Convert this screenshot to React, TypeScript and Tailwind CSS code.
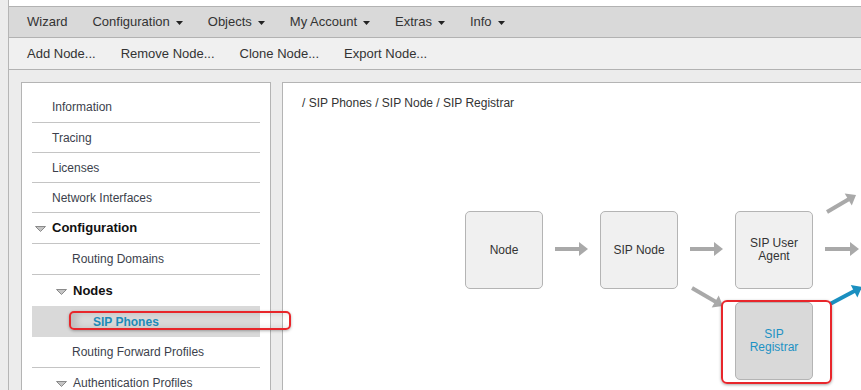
import React from "react";

const menu = [
  { label: "Wizard", caret: false },
  { label: "Configuration", caret: true },
  { label: "Objects", caret: true },
  { label: "My Account", caret: true },
  { label: "Extras", caret: true },
  { label: "Info", caret: true },
];

const actions = ["Add Node...", "Remove Node...", "Clone Node...", "Export Node..."];

// tree rows: h = row height incl. bottom border
const tree = [
  { label: "Information", level: 0, h: "h-[31px]", line: true },
  { label: "Tracing", level: 0, h: "h-[30px]", line: true },
  { label: "Licenses", level: 0, h: "h-[30px]", line: true },
  { label: "Network Interfaces", level: 0, h: "h-[30px]", line: true },
  { label: "Configuration", level: 0, h: "h-[31px]", line: true, folder: true, bold: true },
  { label: "Routing Domains", level: 1, h: "h-[31px]", line: true },
  { label: "Nodes", level: 1, h: "h-[31px]", line: false, folder: true, bold: true },
  { label: "SIP Phones", level: 2, h: "h-[31px]", line: false, active: true },
  { label: "Routing Forward Profiles", level: 1, h: "h-[31px]", line: true },
  { label: "Authentication Profiles", level: 1, h: "h-[31px]", line: true, folder: true },
];

function Caret() {
  return (
    <svg width="7" height="4" viewBox="0 0 7 4" className="ml-[6px] mt-[1px]">
      <polygon points="0,0 7,0 3.5,4" fill="#222" />
    </svg>
  );
}

function TreeToggle() {
  return (
    <svg width="11" height="6" viewBox="0 0 11 6" className="mr-[6px] mt-[2px]">
      <polygon points="0.5,0.5 10.5,0.5 5.5,5.5" fill="#c4c4c4" stroke="#8a8a8a" strokeWidth="1" />
    </svg>
  );
}

function Arrow({ x1, y1, x2, y2, color = "#a9a9a9" }: any) {
  const dx = x2 - x1;
  const dy = y2 - y1;
  const len = Math.sqrt(dx * dx + dy * dy);
  const ux = dx / len;
  const uy = dy / len;
  const hl = 9;
  const hw = 7;
  const bx = x2 - ux * hl;
  const by = y2 - uy * hl;
  const pts = `${x2},${y2} ${bx - uy * hw},${by + ux * hw} ${bx + uy * hw},${by - ux * hw}`;
  return (
    <g>
      <line x1={x1} y1={y1} x2={bx + ux} y2={by + uy} stroke={color} strokeWidth="4" />
      <polygon points={pts} fill={color} />
    </g>
  );
}

function Box({ left, top, active, children }: any) {
  return (
    <div
      className={
        "absolute w-[78px] h-[78px] rounded-[5px] border border-[#b4b4b4] flex items-center justify-center text-center text-[12px] leading-[13px] " +
        (active ? "bg-[#d9d9d9] text-[#1d92c4]" : "bg-[#f0f0f0] text-[#333]")
      }
      style={{ left, top }}
    >
      {children}
    </div>
  );
}

export default function App() {
  return (
    <div
      className="relative flex w-[861px] h-[390px] overflow-hidden bg-white text-[#333]"
      style={{ fontFamily: '"Liberation Sans", Arial, sans-serif' }}
    >
      {/* left frame gutter */}
      <div className="w-[9px] shrink-0 bg-[#ececec] border-r border-[#b5b5b5]" />

      <div className="flex-1 flex flex-col min-w-0">
        <div className="h-[6px] shrink-0 bg-white" />
        {/* menu bar */}
        <div className="h-[32px] shrink-0 flex items-center gap-[25px] pl-[18px] bg-[#d9d9d9] border-y border-[#b2b2b2] text-[13px]">
          {menu.map((m) => (
            <div key={m.label} className="flex items-center">
              <span>{m.label}</span>
              {m.caret ? <Caret /> : null}
            </div>
          ))}
        </div>
        {/* toolbar */}
        <div className="h-[32px] shrink-0 flex items-center gap-[25px] pl-[18px] bg-[#f0f0f0] border-b border-[#b2b2b2] text-[13px]">
          {actions.map((a) => (
            <span key={a}>{a}</span>
          ))}
        </div>

        {/* main */}
        <div className="flex-1 flex items-start gap-[11px] bg-[#ececec] pt-[12px] pl-[12px]">
          {/* tree panel */}
          <div className="w-[250px] h-[400px] shrink-0 bg-white border border-[#b4b4b4] px-[10px] pt-[9px]">
            {tree.map((r) => (
              <div
                key={r.label}
                className={
                  "flex items-center text-[12px] " +
                  r.h +
                  (r.line ? " border-b border-[#c4c4c4]" : "") +
                  (r.active ? " bg-[#d9d9d9]" : "")
                }
                style={{ paddingLeft: r.folder ? 3 + r.level * 21 : 20 + r.level * 20 + (r.level === 2 ? 1 : 0) }}
              >
                {r.folder ? <TreeToggle /> : null}
                <span
                  className={
                    r.active
                      ? "font-bold text-[#1d8cb9]"
                      : r.bold
                      ? "font-bold text-[#111] text-[13px]"
                      : "text-[#3c3f4c]"
                  }
                >
                  {r.label}
                </span>
              </div>
            ))}
          </div>

          {/* diagram panel */}
          <div className="relative w-[620px] h-[400px] shrink-0 bg-white border border-[#b4b4b4]">
            <div className="pl-[19px] pt-[11px] text-[12px] text-[#333]">
              / SIP Phones / SIP Node / SIP Registrar
            </div>

            <svg className="absolute left-0 top-0" width="620" height="320">
              <Arrow x1={272} y1={166} x2={305} y2={166} />
              <Arrow x1={407} y1={166} x2={440} y2={166} />
              <Arrow x1={542} y1={166} x2={576} y2={166} />
              <Arrow x1={544} y1={129} x2={573} y2={112} />
              <Arrow x1={409} y1={205} x2={440} y2={223} />
              <Arrow x1={547} y1={221} x2={579} y2={204} color="#1a8fc0" />
            </svg>

            <Box left={182} top={128}>Node</Box>
            <Box left={317} top={128}>SIP Node</Box>
            <Box left={452} top={128}>
              SIP User
              <br />
              Agent
            </Box>
            <Box left={452} top={219} active>
              SIP
              <br />
              Registrar
            </Box>

            <div className="absolute left-[438px] top-[217px] w-[111px] h-[84px] rounded-[6px] border-2 border-[#e8262b] shadow-[0_1px_3px_rgba(0,0,0,0.35)]" />
          </div>
        </div>
      </div>

      {/* annotation round the active tree item */}
      <div className="absolute left-[69px] top-[311px] w-[222px] h-[19px] rounded-[5px] border-2 border-[#e8262b] shadow-[inset_6px_0_6px_rgba(0,0,0,0.12),0_1px_3px_rgba(0,0,0,0.3)]" />
    </div>
  );
}
